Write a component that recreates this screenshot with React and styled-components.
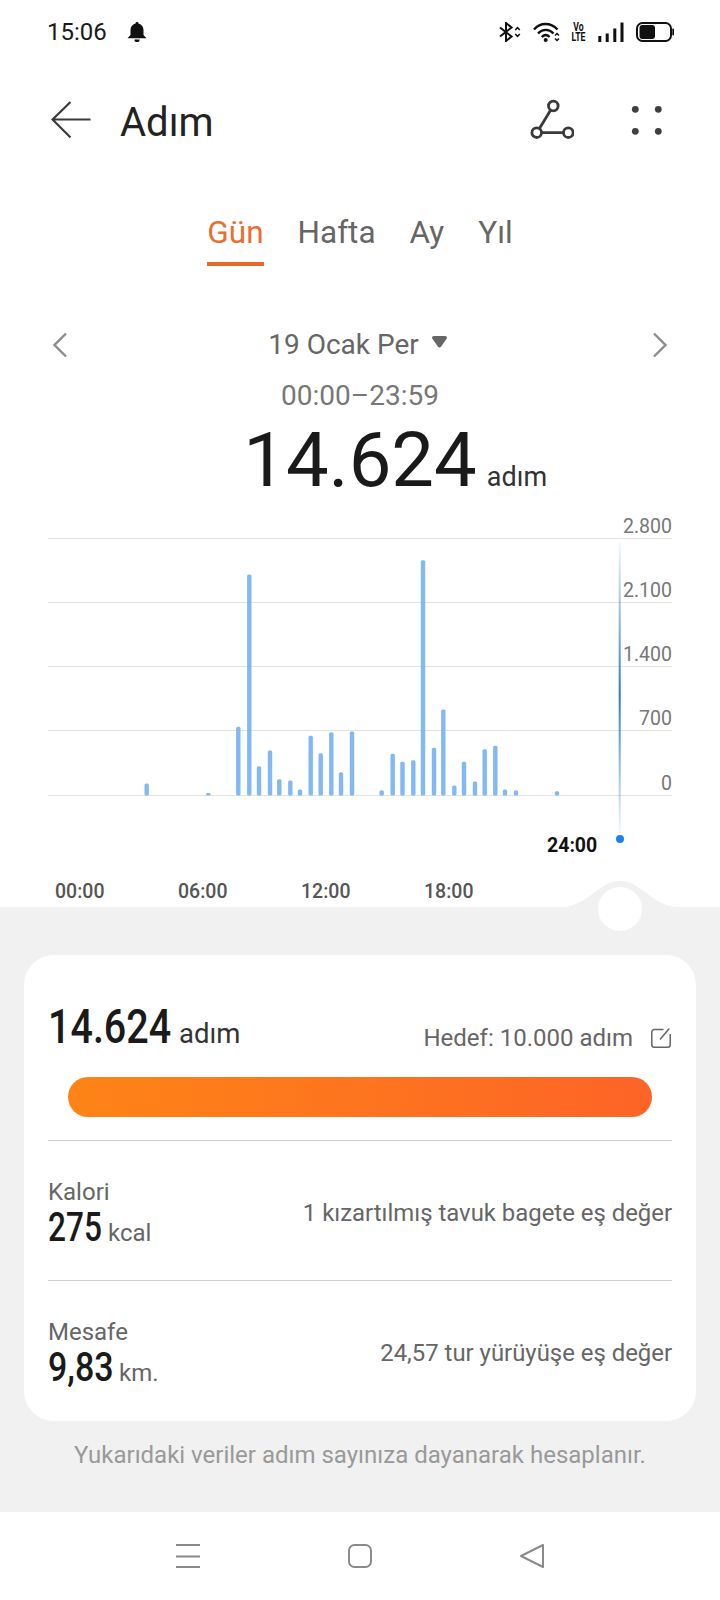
import styled, { createGlobalStyle } from 'styled-components';

const barData = [
  [146.7, 12], [208.3, 2.5], [238.3, 68.7], [249.3, 221], [259, 29.3], [270, 45],
  [279.3, 16.3], [290.3, 15], [300, 6], [310.7, 59.7], [320.7, 42.3], [331.3, 63.3],
  [341, 23.3], [352, 64], [381.7, 5.3], [392.7, 41.7], [402.5, 33.7], [413.3, 35.3],
  [423, 235.3], [434, 47.7], [443.3, 86], [454.3, 10], [464, 33.7], [475, 14],
  [484.7, 46.3], [495.3, 49.7], [505, 6], [516, 5], [557, 4.3],
];

const axisValues = ['2.800', '2.100', '1.400', '700', '0'];
const timeLabels = ['00:00', '06:00', '12:00', '18:00'];

const GlobalStyle = createGlobalStyle`
  body {
    margin: 0;
    background: #fff;
    font-family: Roboto, "Noto Sans", sans-serif;
  }
`;

const BellIcon = () => (
  <svg width="20" height="20" viewBox="0 0 20 20" fill="#111">
    <path d="M10 0a1.500 1.500 0 0 1 1.500 1.400C14.800 2.200 16.500 5 16.500 8.200V13l3 3.300H.5L3.500 13V8.200C3.500 5 5.200 2.200 8.500 1.400A1.500 1.500 0 0 1 10 0z" />
    <path d="M7.400 17.400h5.200a2.600 2.600 0 0 1-5.200 0z" />
  </svg>
);

const BluetoothIcon = () => (
  <svg width="22" height="20" viewBox="0 0 22 20" fill="none" stroke="#111">
    <path d="M1 5.500 12.600 14.500 7 19V1l5.600 4.500L1 14.500" strokeWidth="2" />
    <path d="M16.200 8l2.300-2.400L20.800 8M16.200 12l2.300 2.400 2.300-2.400" strokeWidth="1.600" />
  </svg>
);

const WifiIcon = () => (
  <svg width="27" height="20" viewBox="0 0 27 20" fill="none" stroke="#111">
    <path d="M1 7.500C7.500 .2 17.500 .2 24.500 7.500" strokeWidth="2.400" />
    <path d="M5 11.500c4.500-4.800 11-4.800 15.500 0" strokeWidth="2.400" />
    <path d="M8.800 15c2.400-2.400 5.400-2.400 7.800 0" strokeWidth="2.400" />
    <circle cx="12.700" cy="18" r="2" fill="#111" stroke="none" />
    <path d="M22 13.500l2-2 2 2M22 16.500l2 2 2-2" strokeWidth="1.500" />
  </svg>
);

const SignalIcon = () => (
  <svg width="26" height="20" viewBox="0 0 26 20" fill="#111">
    <rect x="0.300" y="14" width="3" height="6" />
    <rect x="7.700" y="11.500" width="3" height="8.500" />
    <rect x="15.300" y="6.500" width="3" height="13.500" />
    <rect x="22.500" y="0.500" width="3" height="19.500" />
  </svg>
);

const BatteryIcon = () => (
  <svg width="38" height="20" viewBox="0 0 38 20" fill="none">
    <rect x="1" y="1" width="34" height="18" rx="5.500" stroke="#111" strokeWidth="2" />
    <rect x="3.500" y="3" width="15.500" height="14" rx="3" fill="#111" />
    <rect x="36.300" y="6.500" width="1.700" height="7" rx="0.800" fill="#111" />
  </svg>
);

const BackIcon = () => (
  <svg width="40" height="38" viewBox="0 0 40 38" fill="none" stroke="#3a3a3a" strokeWidth="2.200">
    <path d="M1.500 18.500H39.500M19.500 1 1.500 18.500 19.500 36.500" />
  </svg>
);

const RouteIcon = () => (
  <svg width="46" height="44" viewBox="0 0 46 44" fill="none" stroke="#3a3a3a" strokeWidth="2.800">
    <circle cx="25.300" cy="8" r="4.800" />
    <circle cx="8.700" cy="34.700" r="4.800" />
    <circle cx="40.300" cy="34.700" r="4.800" />
    <path d="M22.700 12 11.300 30.700M13.500 34.700H35.500" />
  </svg>
);

const DotsIcon = () => (
  <svg width="32" height="32" viewBox="0 0 32 32" fill="#3f3f3f">
    <circle cx="4.300" cy="5.300" r="3.400" />
    <circle cx="27.300" cy="5.300" r="3.400" />
    <circle cx="4.300" cy="27.300" r="3.400" />
    <circle cx="27.300" cy="27.300" r="3.400" />
  </svg>
);

const ChevronIcon = ({ flip }) => (
  <svg width="15" height="26" viewBox="0 0 15 26" fill="none" stroke="#8c8c8c" strokeWidth="2.400">
    <path d={flip ? 'M2 1.500 13.500 13 2 24.500' : 'M13 1.500 1.500 13 13 24.500'} />
  </svg>
);

const CaretIcon = () => (
  <CaretSvg width="15" height="12" viewBox="0 0 15 12" fill="#666">
    <path d="M1.800 0h11.400c1.400 0 2.200 1.500 1.400 2.700L9 10.800c-.7 1-2.300 1-3 0L.4 2.700C-.4 1.500.4 0 1.800 0z" />
  </CaretSvg>
);

const EditIcon = () => (
  <EditSvg width="20" height="20" viewBox="0 0 20 20" fill="none" stroke="#666" strokeWidth="1.500">
    <path d="M12.500 1.500H3.300A2.500 2.500 0 0 0 .8 4v12.700a2.500 2.500 0 0 0 2.500 2.500h13.400a2.500 2.500 0 0 0 2.500-2.500V6" />
    <path d="M9 11.500 18.300 .6" />
  </EditSvg>
);

const MenuIcon = () => (
  <svg width="24" height="24" viewBox="0 0 24 24" fill="none" stroke="#8a8a8a" strokeWidth="1.800">
    <path d="M0 1h24.500M0 12.500h24.500M0 23h24.500" />
  </svg>
);

const HomeIcon = () => (
  <svg width="24" height="24" viewBox="0 0 24 24" fill="none" stroke="#8a8a8a" strokeWidth="2">
    <rect x="1" y="1" width="22" height="22" rx="5.500" />
  </svg>
);

const NavBackIcon = () => (
  <svg width="24" height="24" viewBox="0 0 24 24" fill="none" stroke="#8a8a8a" strokeWidth="2" strokeLinejoin="round">
    <path d="M23 1 1 12 23 23z" />
  </svg>
);

const App = () => (
  <Page>
    <GlobalStyle />
    <StatusBar>
      <StatusLeft>
        <Clock>15:06</Clock>
        <BellIcon />
      </StatusLeft>
      <StatusRight>
        <BluetoothIcon />
        <WifiIcon />
        <VoLte>
          <span>Vo</span>
          <span>LTE</span>
        </VoLte>
        <SignalIcon />
        <BatteryIcon />
      </StatusRight>
    </StatusBar>

    <Header>
      <HeaderLeft>
        <BackIcon />
        <Title>Adım</Title>
      </HeaderLeft>
      <HeaderRight>
        <RouteIcon />
        <DotsIcon />
      </HeaderRight>
    </Header>

    <Tabs>
      <Tab $active>Gün</Tab>
      <Tab>Hafta</Tab>
      <Tab>Ay</Tab>
      <Tab>Yıl</Tab>
    </Tabs>

    <DateRow>
      <ChevronIcon />
      <DateLabel>
        19 Ocak Per
        <CaretIcon />
      </DateLabel>
      <ChevronIcon flip />
    </DateRow>
    <TimeRange>00:00–23:59</TimeRange>
    <TotalRow>
      <TotalNumber>14.624</TotalNumber>
      <TotalUnit>adım</TotalUnit>
    </TotalRow>

    <Chart>
      {axisValues.map((value, i) => (
        <GridRow key={value} $first={i === 0} $last={i === axisValues.length - 1}>
          <AxisValue>{value}</AxisValue>
        </GridRow>
      ))}
      <BarsLayer viewBox="48 516 624 340" width="624" height="340">
        <defs>
          <linearGradient id="cursorFade" x1="0" y1="0" x2="0" y2="1">
            <stop offset="0" stopColor="#2a7db5" stopOpacity="0.05" />
            <stop offset="0.52" stopColor="#2a7db5" stopOpacity="1" />
            <stop offset="1" stopColor="#2a7db5" stopOpacity="0.05" />
          </linearGradient>
        </defs>
        {barData.map(([cx, h]) => (
          <rect key={cx} x={cx - 2.2} y={795.5 - h} width="4.400" height={h} rx="1.500" fill="#82b8f4" />
        ))}
        <rect x="618.700" y="543" width="2" height="290" fill="url(#cursorFade)" />
        <circle cx="620" cy="839" r="4" fill="#1a82ee" />
      </BarsLayer>
      <CursorTime>24:00</CursorTime>
    </Chart>

    <TimeAxis>
      {timeLabels.map((label) => (
        <TimeLabel key={label}>{label}</TimeLabel>
      ))}
    </TimeAxis>

    <GraySection>
      <Hump width="130" height="28" viewBox="0 0 130 28">
        <path d="M0 28C34 28 42 1 65 1S96 28 130 28z" fill="#f1f1f1" />
      </Hump>
      <Knob />

      <Card>
        <StepsRow>
          <StepsValue>
            <DinNumber $size={49} $width={121} $scale={0.806}>14.624</DinNumber>
            <StepsUnit>adım</StepsUnit>
          </StepsValue>
          <Goal>
            Hedef: 10.000 adım
            <EditIcon />
          </Goal>
        </StepsRow>
        <Progress />
        <Metric>
          <MetricLeft>
            <MetricName>Kalori</MetricName>
            <MetricValue>
              <DinNumber $size={40} $width={53} $scale={0.79}>275</DinNumber>
              <MetricUnit>kcal</MetricUnit>
            </MetricValue>
          </MetricLeft>
          <MetricNote>1 kızartılmış tavuk bagete eş değer</MetricNote>
        </Metric>
        <Metric>
          <MetricLeft>
            <MetricName>Mesafe</MetricName>
            <MetricValue>
              <DinNumber $size={40} $width={64} $scale={0.85}>9,83</DinNumber>
              <MetricUnit>km.</MetricUnit>
            </MetricValue>
          </MetricLeft>
          <MetricNote>24,57 tur yürüyüşe eş değer</MetricNote>
        </Metric>
      </Card>
      <Footnote>Yukarıdaki veriler adım sayınıza dayanarak hesaplanır.</Footnote>
    </GraySection>

    <NavBar>
      <MenuIcon />
      <HomeIcon />
      <NavBackIcon />
    </NavBar>
  </Page>
);

const Page = styled.div`
  width: 720px;
  height: 1600px;
  display: flex;
  flex-direction: column;
  overflow: hidden;
  background: #fff;
`;

const StatusBar = styled.div`
  height: 64px;
  flex-shrink: 0;
  padding: 0 46px 0 47px;
  display: flex;
  align-items: center;
  justify-content: space-between;
`;

const StatusLeft = styled.div`
  display: flex;
  align-items: center;
  gap: 20px;
`;

const Clock = styled.span`
  font-size: 24px;
  line-height: 28px;
  color: #1a1a1a;
`;

const StatusRight = styled.div`
  display: flex;
  align-items: center;
  gap: 12px;
`;

const VoLte = styled.div`
  display: flex;
  flex-direction: column;
  align-items: center;
  width: 15px;
  margin-left: -1px;
  font-weight: 700;
  font-size: 12px;
  line-height: 10px;
  color: #111;
  transform: scaleX(0.72);
`;

const Header = styled.div`
  height: 111px;
  flex-shrink: 0;
  padding: 0 57px 0 51px;
  display: flex;
  align-items: center;
  justify-content: space-between;
`;

const HeaderLeft = styled.div`
  display: flex;
  align-items: center;
  gap: 29px;
`;

const Title = styled.h1`
  margin: 7px 0 0;
  font-size: 40px;
  line-height: 44px;
  font-weight: 400;
  color: #222;
`;

const HeaderRight = styled.div`
  display: flex;
  align-items: center;
  gap: 57px;
`;

const Tabs = styled.div`
  margin-top: 40px;
  display: flex;
  justify-content: center;
  gap: 34px;
`;

const Tab = styled.div`
  font-size: 31.5px;
  line-height: 36px;
  padding-bottom: 11px;
  color: ${(props) => (props.$active ? '#e8702f' : '#666')};
  border-bottom: 4px solid ${(props) => (props.$active ? '#e56a2c' : 'transparent')};
`;

const DateRow = styled.div`
  margin-top: 59px;
  height: 40px;
  padding: 0 53px;
  display: flex;
  align-items: center;
  justify-content: space-between;
`;

const DateLabel = styled.div`
  display: flex;
  align-items: center;
  gap: 13px;
  margin-left: -5px;
  font-size: 28px;
  line-height: 40px;
  color: #666;
`;

const CaretSvg = styled.svg`
  margin-bottom: 6px;
`;

const TimeRange = styled.div`
  margin-top: 13px;
  text-align: center;
  font-size: 28px;
  line-height: 36px;
  color: #777;
`;

const TotalRow = styled.div`
  box-sizing: border-box;
  height: 102px;
  padding: 2px 0 0 71px;
  display: flex;
  justify-content: center;
  align-items: baseline;
  gap: 10px;
`;

const TotalNumber = styled.span`
  font-size: 76px;
  line-height: 88px;
  color: #1a1a1a;
`;

const TotalUnit = styled.span`
  width: 61px;
  font-size: 27px;
  color: #333;
`;

const Chart = styled.div`
  position: relative;
  margin: 0 48px;
  width: 624px;
`;

const GridRow = styled.div`
  box-sizing: border-box;
  height: ${(props) => (props.$first ? '23px' : props.$last ? '65px' : '64px')};
  border-bottom: 1px solid #e2e2e2;
  display: flex;
  align-items: flex-end;
  justify-content: flex-end;
`;

const AxisValue = styled.span`
  font-size: 19.5px;
  line-height: 22px;
  color: #777;
`;

const BarsLayer = styled.svg`
  position: absolute;
  left: 0;
  top: 0;
`;

const CursorTime = styled.span`
  position: absolute;
  left: 499px;
  top: 318px;
  font-size: 19.5px;
  line-height: 24px;
  font-weight: 700;
  color: #111;
`;

const TimeAxis = styled.div`
  margin-top: 80px;
  height: 31px;
  padding-left: 55px;
  display: flex;
  align-items: center;
`;

const TimeLabel = styled.span`
  width: 123px;
  font-size: 19.5px;
  line-height: 24px;
  font-weight: 500;
  color: #555;
`;

const GraySection = styled.div`
  position: relative;
  flex: 1;
  padding: 48px 24px 0;
  background: #f1f1f1;
`;

const Hump = styled.svg`
  position: absolute;
  left: 555px;
  top: -27px;
`;

const Knob = styled.div`
  position: absolute;
  left: 598px;
  top: -20px;
  width: 44px;
  height: 44px;
  border-radius: 50%;
  background: #fff;
`;

const Card = styled.div`
  box-sizing: border-box;
  height: 466px;
  padding: 0 24px;
  background: #fff;
  border-radius: 30px;
`;

const StepsRow = styled.div`
  height: 122px;
  padding-top: 45px;
  box-sizing: border-box;
  display: flex;
  align-items: flex-start;
  justify-content: space-between;
`;

const StepsValue = styled.div`
  display: flex;
  align-items: baseline;
  gap: 10px;
`;

// the reference uses a condensed DIN style for numbers, Roboto squeezed comes closest
const DinNumber = styled.span`
  display: inline-block;
  width: ${(props) => props.$width}px;
  font-size: ${(props) => props.$size}px;
  line-height: 1.1;
  font-weight: 500;
  white-space: nowrap;
  color: #1a1a1a;
  transform: scaleX(${(props) => props.$scale});
  transform-origin: left;
`;

const StepsUnit = styled.span`
  font-size: 27.5px;
  color: #333;
`;

const Goal = styled.div`
  margin-top: 23.5px;
  display: flex;
  align-items: center;
  gap: 18px;
  font-size: 24px;
  color: #666;
`;

const EditSvg = styled.svg`
  margin-right: 1px;
`;

const Progress = styled.div`
  height: 40px;
  margin: 0 20px 23px;
  border-radius: 20px;
  background: linear-gradient(90deg, #fe8416, #fd6427);
`;

const Metric = styled.div`
  box-sizing: border-box;
  height: 140px;
  padding-top: 4px;
  display: flex;
  align-items: center;
  justify-content: space-between;
  border-top: 1px solid #ccc;
`;

const MetricLeft = styled.div`
  padding-top: 2px;
`;

const MetricName = styled.div`
  font-size: 24px;
  line-height: 28px;
  color: #666;
`;

const MetricValue = styled.div`
  display: flex;
  align-items: baseline;
  gap: 7px;
`;

const MetricUnit = styled.span`
  font-size: 24px;
  color: #666;
`;

const MetricNote = styled.div`
  font-size: 23.9px;
  line-height: 30px;
  color: #666;
`;

const Footnote = styled.div`
  margin-top: 20px;
  text-align: center;
  font-size: 24px;
  line-height: 28px;
  color: #999;
`;

const NavBar = styled.div`
  height: 88px;
  flex-shrink: 0;
  display: flex;
  align-items: center;
  justify-content: center;
  gap: 148px;
  background: #fff;
`;

export default App;
